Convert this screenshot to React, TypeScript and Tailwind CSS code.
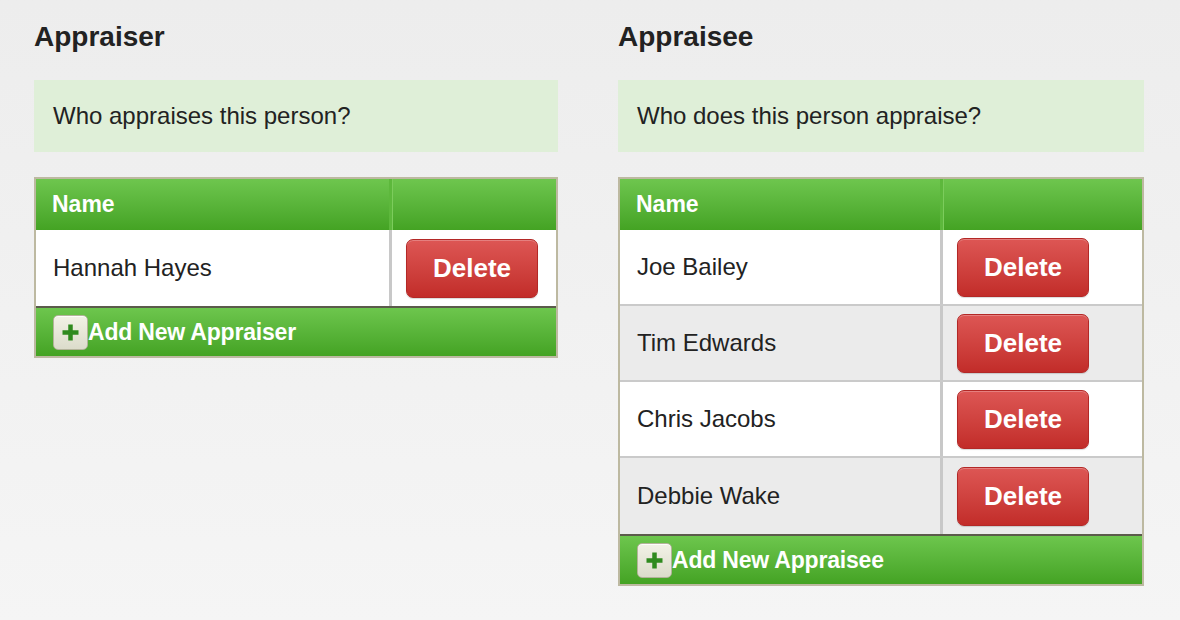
type Panel = {
  title: string;
  question: string;
  people: string[];
  addLabel: string;
  width: string;
  nameCol: string;
};

const panels: Panel[] = [
  {
    title: "Appraiser",
    question: "Who appraises this person?",
    people: ["Hannah Hayes"],
    addLabel: "Add New Appraiser",
    width: "w-[524px]",
    nameCol: "w-[356px]",
  },
  {
    title: "Appraisee",
    question: "Who does this person appraise?",
    people: ["Joe Bailey", "Tim Edwards", "Chris Jacobs", "Debbie Wake"],
    addLabel: "Add New Appraisee",
    width: "w-[526px]",
    nameCol: "w-[323px]",
  },
];

function PlusBox() {
  return (
    <span className="flex h-[35px] w-[35px] shrink-0 items-center justify-center rounded-[5px] border border-[#b3b39a] bg-linear-to-b from-[#f2f2e6] to-[#dcdccb] shadow-[inset_0_1px_0_rgba(255,255,255,0.8)]">
      <svg width="19" height="19" viewBox="0 0 19 19">
        <path d="M9.5 1.5v16M1.5 9.5h16" stroke="#2f8a1e" strokeWidth="4.5" strokeLinecap="butt" />
      </svg>
    </span>
  );
}

function DeleteButton() {
  return (
    <button className="flex h-[59px] w-[132px] items-center justify-center rounded-[7px] border border-[#b32826] bg-linear-to-b from-[#dd5654] to-[#c22c29] text-[26px] font-bold text-white shadow-[inset_0_1px_0_rgba(255,255,255,0.25),0_1px_1px_rgba(0,0,0,0.15)]">
      Delete
    </button>
  );
}

function PanelView({ panel }: { panel: Panel }) {
  return (
    <section className={panel.width}>
      <h2 className="text-[28px] leading-[30px] font-bold text-[#222]">{panel.title}</h2>

      <div className="mt-[28px] flex h-[72px] items-center bg-[#dfefd8] px-[19px] text-[24px] text-[#222]">
        {panel.question}
      </div>

      <div className="mt-[25px] border-2 border-[#bdb9a1]">
        {/* header */}
        <div className="flex h-[51px] bg-linear-to-b from-[#6ec64e] to-[#44a323] text-[23px] font-bold text-white">
          <div className={`${panel.nameCol} flex items-center pl-[16px] border-r-[3px] border-r-[#5db83c]`}>
            Name
          </div>
          <div className="flex-1 border-l border-l-[#7ccc5c]" />
        </div>

        {/* rows */}
        {panel.people.map((person, i) => (
          <div
            key={person}
            className={`flex h-[76px] text-[24px] text-[#222] ${
              i % 2 === 0 ? "bg-white" : "bg-[#ebebeb]"
            } ${i < panel.people.length - 1 ? "border-b-2 border-b-[#cacaca]" : ""}`}
          >
            <div className={`${panel.nameCol} flex items-center pl-[17px] border-r-[3px] border-r-[#c8c8c8]`}>
              {person}
            </div>
            <div className="flex flex-1 items-center pl-[14px]">
              <DeleteButton />
            </div>
          </div>
        ))}

        {/* footer */}
        <div className="flex h-[50px] items-center border-t-2 border-t-[#5b5b4b] bg-linear-to-b from-[#6dc64d] to-[#44a323] pl-[17px] text-[23px] font-bold tracking-[-0.2px] text-white">
          <PlusBox />
          <span>{panel.addLabel}</span>
        </div>
      </div>
    </section>
  );
}

export default function App() {
  return (
    <div className="flex min-h-[620px] items-start gap-[60px] bg-linear-to-b from-[#ededed] to-[#f5f5f5] pl-[34px] pt-[22px] font-['Liberation_Sans',Arial,sans-serif]">
      {panels.map((p) => (
        <PanelView key={p.title} panel={p} />
      ))}
    </div>
  );
}
